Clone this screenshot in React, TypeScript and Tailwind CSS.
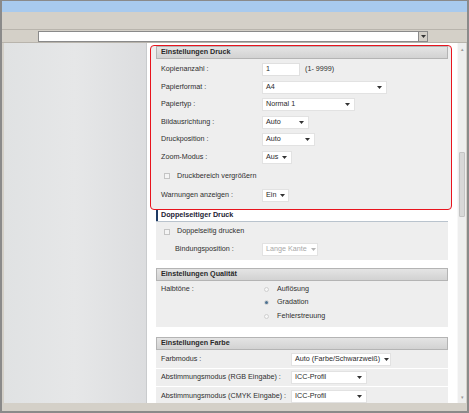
import React from "react";

const font = { fontFamily: '"Liberation Sans", Arial, sans-serif' };

const Caret = ({ disabled }: { disabled?: boolean }) => (
  <svg width="5" height="3" viewBox="0 0 5 3" className="shrink-0">
    <path d="M0 0 L5 0 L2.5 3 Z" fill={disabled ? "#b5b5b5" : "#333"} />
  </svg>
);

const SelectBox = ({
  value,
  width,
  disabled,
}: {
  value: string;
  width: string;
  disabled?: boolean;
}) => (
  <div
    className={`flex h-[13px] items-center justify-between gap-[4px] border border-[#e2e2e2] bg-white pl-[3px] pr-[4px] ${width} ${
      disabled ? "text-[#a8a8a8]" : "text-[#2a2a2a]"
    }`}
  >
    <span className="whitespace-nowrap">{value}</span>
    <Caret disabled={disabled} />
  </div>
);

const Header = ({ title }: { title: string }) => (
  <div className="flex h-[13px] items-center border border-[#b4b4b4] bg-gradient-to-b from-[#e4e4e4] to-[#d2d2d2] pl-[4px] font-bold text-[#2a2a2a]">
    {title}
  </div>
);

const Row = ({
  label,
  children,
  h = "h-[17.5px]",
}: {
  label: string;
  children: React.ReactNode;
  h?: string;
}) => (
  <div className={`flex items-center ${h}`}>
    <div className="w-[106px] shrink-0 pl-[5px] whitespace-nowrap">{label}</div>
    {children}
  </div>
);

const Checkbox = () => (
  <div className="h-[6px] w-[6px] shrink-0 border border-[#c4c4c4] bg-[#f4f4f4]" />
);

const Radio = ({ checked }: { checked?: boolean }) => (
  <div className="flex h-[5px] w-[5px] shrink-0 items-center justify-center rounded-full border border-[#cfcfcf] bg-[#f6f6f6]">
    {checked && <div className="h-[3px] w-[3px] rounded-full bg-[#4a6f8f]" />}
  </div>
);

export default function App() {
  return (
    <div
      className="flex h-[413px] w-[469px] flex-col overflow-hidden border-x-2 border-t border-b-2 border-[#8a8a8a] bg-[#d4d0c8] text-[7.2px] text-[#2e2e2e]"
      style={font}
    >
      {/* title strip */}
      <div className="h-[11px] shrink-0 bg-[#a8caee]" />
      {/* toolbar */}
      <div className="h-[18px] shrink-0 border-b border-[#b8b4ac]" />
      <div className="flex h-[13px] shrink-0 items-center border-b border-[#b8b4ac] pl-[36px]">
        <div className="flex h-[11px] w-[390px] items-center justify-end border border-[#8a8a8a] bg-white">
          <div className="flex h-[9px] w-[9px] items-center justify-center border-l border-[#8a8a8a] bg-[#d4d0c8]">
            <Caret />
          </div>
        </div>
      </div>

      {/* main */}
      <div className="flex min-h-0 flex-1 pl-[2px] pr-[1px]">
        <div className="w-[143px] shrink-0 border-r border-[#c9cbcd] bg-gradient-to-r from-[#e0e2e3] via-[#e6e7e8] to-[#dcdddf]" />

        <div className="min-w-0 flex-1 overflow-hidden bg-white pl-[3px] pt-[2px]">
          {/* Einstellungen Druck */}
          <div className="w-[302px] rounded-[4px] border border-[#e8141e] bg-[#eeeeee] pl-[5px] pr-[3px] pb-[4px]">
            <Header title="Einstellungen Druck" />
            <div className="pt-[2px]">
              <Row label="Kopienanzahl :">
                <div className="flex h-[13px] w-[38px] items-center border border-[#e0e0e0] bg-white pl-[3px]">1</div>
                <span className="ml-[5px]">(1- 9999)</span>
              </Row>
              <Row label="Papierformat :">
                <SelectBox value="A4" width="w-[125px]" />
              </Row>
              <Row label="Papiertyp :">
                <SelectBox value="Normal 1" width="w-[93px]" />
              </Row>
              <Row label="Bildausrichtung :">
                <SelectBox value="Auto" width="w-[47px]" />
              </Row>
              <Row label="Druckposition :">
                <SelectBox value="Auto" width="w-[53px]" />
              </Row>
              <Row label="Zoom-Modus :">
                <SelectBox value="Aus" width="w-[30px]" />
              </Row>
              <div className="flex h-[20.5px] items-center pl-[8px]">
                <Checkbox />
                <span className="ml-[7px]">Druckbereich vergrößern</span>
              </div>
              <Row label="Warnungen anzeigen :" h="h-[18px]">
                <SelectBox value="Ein" width="w-[27px]" />
              </Row>
            </div>
          </div>

          <div className="ml-[6px] w-[292px]">
            {/* Doppelseitiger Druck */}
            <div className="flex h-[12px] items-center border-b border-[#b9c3cd]">
              <div className="h-full w-[2px] bg-[#1e3a64]" />
              <span className="ml-[3px] font-bold text-[#223]">Doppelseitiger Druck</span>
            </div>
            <div className="bg-[#eeeeee] pb-[3px]">
              <div className="flex h-[20px] items-center pl-[8px]">
                <Checkbox />
                <span className="ml-[7px]">Doppelseitig drucken</span>
              </div>
              <div className="flex h-[15px] items-center">
                <div className="w-[106px] shrink-0 pl-[19px]">Bindungsposition :</div>
                <SelectBox value="Lange Kante" width="w-[56px]" disabled />
              </div>
            </div>

            {/* Einstellungen Qualität */}
            <div className="mt-[8px]">
              <Header title="Einstellungen Qualität" />
              <div className="flex bg-[#eeeeee] pb-[4px] pt-[2px]">
                <div className="w-[108px] shrink-0 pl-[5px] pt-[1px]">Halbtöne :</div>
                <div className="flex flex-col">
                  {[
                    ["Auflösung", false],
                    ["Gradation", true],
                    ["Fehlerstreuung", false],
                  ].map(([l, c]) => (
                    <div key={l as string} className="flex h-[13.5px] items-center">
                      <Radio checked={c as boolean} />
                      <span className="ml-[8px]">{l as string}</span>
                    </div>
                  ))}
                </div>
              </div>
            </div>

            {/* Einstellungen Farbe */}
            <div className="mt-[10px]">
              <Header title="Einstellungen Farbe" />
              <div className="flex h-[19px] items-center border-b border-white bg-[#eeeeee]">
                <div className="w-[135px] shrink-0 pl-[5px]">Farbmodus :</div>
                <SelectBox value="Auto (Farbe/Schwarzweiß)" width="w-[100px]" />
              </div>
              <div className="flex h-[18px] items-center border-b border-white bg-[#eeeeee]">
                <div className="w-[135px] shrink-0 pl-[5px] whitespace-nowrap">Abstimmungsmodus (RGB Eingabe) :</div>
                <SelectBox value="ICC-Profil" width="w-[76px]" />
              </div>
              <div className="flex h-[18px] items-center bg-[#eeeeee]">
                <div className="w-[135px] shrink-0 pl-[5px] whitespace-nowrap">Abstimmungsmodus (CMYK Eingabe) :</div>
                <SelectBox value="ICC-Profil" width="w-[76px]" />
              </div>
            </div>
          </div>
        </div>

        {/* scrollbar */}
        <div className="flex w-[9px] shrink-0 flex-col items-center border-l border-[#f8f8f8] bg-[#eeeeee]">
          <div className="mt-[4px] text-[5px] leading-none text-[#9a9a9a]">▴</div>
          <div className="mt-[100px] h-[65px] w-[6px] rounded-[1px] border border-[#c4c4c4] bg-[#d8d8d8]" />
          <div className="flex-1" />
          <div className="mb-[3px] text-[5px] leading-none text-[#9a9a9a]">▾</div>
        </div>
      </div>

      <div className="h-[8px] shrink-0" />
    </div>
  );
}
